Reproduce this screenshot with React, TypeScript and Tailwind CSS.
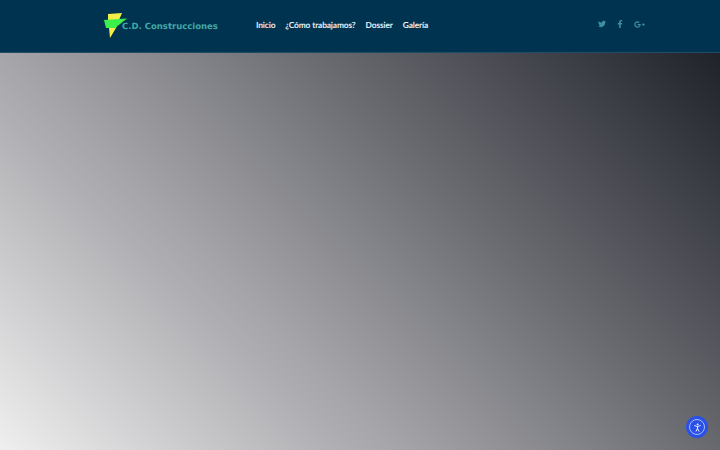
import { FaTwitter, FaFacebookF, FaGooglePlusG } from 'react-icons/fa'
import { PersonStanding } from 'lucide-react'

const navLinks = ['Inicio', '¿Cómo trabajamos?', 'Dossier', 'Galería']

function Logo() {
  return (
    <div className="flex items-center w-[152px]">
      <svg width="24" height="26" viewBox="0 0 24 26" className="shrink-0 mt-[-1px]">
        <polygon points="4,1 18,0 15,7 12,15 6,25 5,15 4,8" fill="#f2ee45" />
        <polygon points="0,7 23,5.5 11,15 2,15" fill="#3cf04c" />
      </svg>
      <span className="ml-[-6px] mt-[2px] font-['DejaVu_Sans'] font-bold text-[8.5px] text-[#40a8a6] whitespace-nowrap [text-rendering:geometricPrecision]">
        C.D. Construcciones
      </span>
    </div>
  )
}

export default function App() {
  return (
    <div className="relative h-[450px] w-[720px] overflow-hidden font-['Lato',sans-serif]">
      <header className="h-[53px] bg-[#003350] border-b border-[#1d4c66] flex items-center pl-[104px] pr-[75px]">
        <Logo />
        <nav className="flex gap-[10px] text-[8.4px] tracking-[-0.15px] font-bold text-[#e8eef2] mt-[-2px] [text-rendering:geometricPrecision]">
          {navLinks.map((link) => (
            <a key={link} href="#" className="whitespace-nowrap">
              {link}
            </a>
          ))}
        </nav>
        <div className="ml-auto flex items-center gap-[10px] text-[#3e8fa3] mt-[-4px]">
          <FaTwitter size={8} />
          <FaFacebookF size={8} />
          <FaGooglePlusG size={11} />
        </div>
      </header>
      <main className="h-[397px] bg-[linear-gradient(45deg,#efefef,#b0b0b4_30%,#a5a5a9_36%,#6d6e74_62%,#20222a)]" />
      <button className="absolute right-[12px] bottom-[12px] w-[22px] h-[22px] rounded-full bg-[#2b50e8] flex items-center justify-center">
        <span className="w-[16px] h-[16px] rounded-full border border-[#a9bcf5] flex items-center justify-center">
          <PersonStanding size={11} color="#ffffff" />
        </span>
      </button>
    </div>
  )
}
